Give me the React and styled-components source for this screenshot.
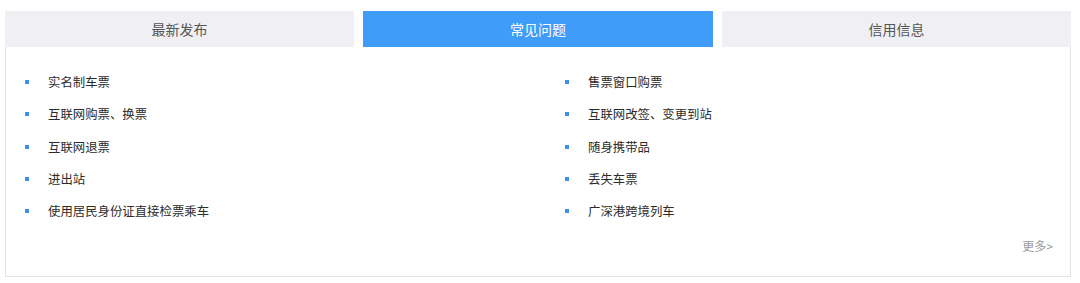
import React, { useState } from "react";
import styled, { createGlobalStyle } from "styled-components";

const Global = createGlobalStyle`
  html, body { margin: 0; padding: 0; background: #fff; }
  body { font-family: "PingFang SC", "Noto Sans CJK SC", "Noto Sans", sans-serif; }
`;

const Wrap = styled.div`
  width: 1066px;
  padding: 11px 0 0 5px;
`;

const Tabs = styled.div`
  display: grid;
  grid-template-columns: 349px 350px 349px;
  column-gap: 9px;
  justify-content: space-between;
`;

const Tab = styled.div`
  height: 36px;
  line-height: 36px;
  text-align: center;
  font-size: 14px;
  color: ${(p) => (p.$active ? "#fff" : "#555")};
  background: ${(p) => (p.$active ? "#409cf9" : "#f0f0f4")};
  cursor: pointer;
`;

const Panel = styled.div`
  border: 1px solid #e3e3e6;
  border-top: none;
  height: 230px;
  box-sizing: border-box;
  padding: 19px 0 0 19px;
  display: flex;
  flex-direction: column;
`;

const Columns = styled.div`
  display: grid;
  grid-template-columns: 540px 1fr;
`;

const List = styled.ul`
  list-style: none;
  margin: 0;
  padding: 0;
`;

const Item = styled.li`
  display: flex;
  align-items: center;
  height: 32.3px;
  font-size: 12.4px;
  color: #2b2b2b;
`;

const Bullet = styled.span`
  width: 4px;
  height: 4px;
  background: #3d8fe9;
  margin-right: 19px;
  flex: none;
`;

const More = styled.div`
  align-self: flex-end;
  margin: 10px 17px 0 0;
  font-size: 12px;
  color: #999;
`;

const left = ["实名制车票", "互联网购票、换票", "互联网退票", "进出站", "使用居民身份证直接检票乘车"];
const right = ["售票窗口购票", "互联网改签、变更到站", "随身携带品", "丢失车票", "广深港跨境列车"];

export default function App() {
  const [active, setActive] = useState(1);
  const tabs = ["最新发布", "常见问题", "信用信息"];
  return (
    <>
      <Global />
      <Wrap>
        <Tabs>
          {tabs.map((t, i) => (
            <Tab key={t} $active={i === active} onClick={() => setActive(i)}>
              {t}
            </Tab>
          ))}
        </Tabs>
        <Panel>
          <Columns>
            {[left, right].map((col, ci) => (
              <List key={ci}>
                {col.map((s) => (
                  <Item key={s}>
                    <Bullet />
                    {s}
                  </Item>
                ))}
              </List>
            ))}
          </Columns>
          <More>更多&gt;</More>
        </Panel>
      </Wrap>
    </>
  );
}
